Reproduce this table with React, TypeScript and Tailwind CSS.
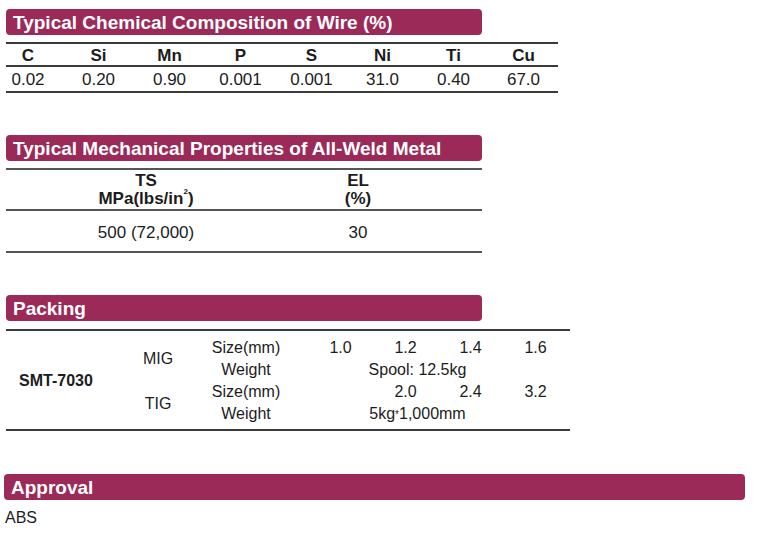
const font = { fontFamily: '"Liberation Sans", Arial, sans-serif' }

function Bar({ title, wide }: { title: string; wide?: boolean }) {
	return (
		<div
			className={`h-[26px] rounded-[4px] bg-[#9c2a58] flex items-center pl-[7px] pt-[1px] text-white font-bold text-[19px] leading-none ${
				wide ? "ml-[4px] w-[741px]" : "ml-[6px] w-[476px]"
			}`}
		>
			{title}
		</div>
	)
}

const chem = [
	["C", "0.02"],
	["Si", "0.20"],
	["Mn", "0.90"],
	["P", "0.001"],
	["S", "0.001"],
	["Ni", "31.0"],
	["Ti", "0.40"],
	["Cu", "67.0"],
]

const chemWidths = ["w-[57px] pr-[13px]", "w-[71px]", "w-[71px]", "w-[71px]", "w-[71px]", "w-[71px]", "w-[71px]", "w-[69px]"]

export default function App() {
	return (
		<div className="w-[761px] h-[542px] bg-white text-[#1c1c1c] overflow-hidden" style={font}>
			{/* Chemical composition */}
			<div className="pt-[9px]">
				<Bar title="Typical Chemical Composition of Wire (%)" />
			</div>
			<div className="ml-[6px] mt-[7px] w-[552px] border-t-2 border-b-2 border-[#3a3a3a] text-[17px]">
				<div className="flex h-[23px] items-center pt-[2px] font-bold border-b-2 border-[#3a3a3a]">
					{chem.map(([k], i) => (
						<div key={k} className={`${chemWidths[i]} text-center`}>
							{k}
						</div>
					))}
				</div>
				<div className="flex h-[24px] items-center pt-[2px]">
					{chem.map(([k, v], i) => (
						<div key={k} className={`${chemWidths[i]} text-center`}>
							{v}
						</div>
					))}
				</div>
			</div>

			{/* Mechanical properties */}
			<div className="mt-[42px]">
				<Bar title="Typical Mechanical Properties of All-Weld Metal" />
			</div>
			<div className="ml-[6px] mt-[7px] w-[476px] border-t-2 border-b-2 border-[#555] text-[17px]">
				<div className="flex h-[41px] items-center pt-[1px] font-bold leading-[18px] border-b-2 border-[#555]">
					<div className="w-[280px] text-center">
						TS
						<br />
						MPa(lbs/in<sup className="text-[8px] align-[6px]">2</sup>)
					</div>
					<div className="w-[144px] text-center">
						EL
						<br />
						(%)
					</div>
				</div>
				<div className="flex h-[40px] items-center pt-[3px]">
					<div className="w-[280px] text-center">500 (72,000)</div>
					<div className="w-[144px] text-center">30</div>
				</div>
			</div>

			{/* Packing */}
			<div className="mt-[42px]">
				<Bar title="Packing" />
			</div>
			<div className="ml-[6px] mt-[8px] w-[564px] border-t-2 border-b-2 border-[#3a3a3a] text-[16px] leading-[22px]">
				<div className="flex pt-[6px] pb-[4px]">
					<div className="w-[100px] flex items-center justify-center font-bold">SMT-7030</div>
					<div className="w-[104px] flex flex-col">
						<div className="h-[44px] flex items-center justify-center">MIG</div>
						<div className="h-[44px] flex items-center justify-center pt-[2px]">TIG</div>
					</div>
					<div className="flex flex-col">
						<div className="flex h-[22px]">
							<div className="w-[72px] text-center">Size(mm)</div>
							<div className="ml-[26px] w-[65px] text-center">1.0</div>
							<div className="w-[65px] text-center">1.2</div>
							<div className="w-[65px] text-center">1.4</div>
							<div className="w-[65px] text-center">1.6</div>
						</div>
						<div className="flex h-[22px]">
							<div className="w-[72px] text-center">Weight</div>
							<div className="w-[271px] text-center">Spool: 12.5kg</div>
						</div>
						<div className="flex h-[22px]">
							<div className="w-[72px] text-center">Size(mm)</div>
							<div className="ml-[91px] w-[65px] text-center">2.0</div>
							<div className="w-[65px] text-center">2.4</div>
							<div className="w-[65px] text-center">3.2</div>
						</div>
						<div className="flex h-[22px]">
							<div className="w-[72px] text-center">Weight</div>
							<div className="w-[271px] text-center">
								5kg<span className="text-[10px] align-[1px]">*</span>1,000mm
							</div>
						</div>
					</div>
				</div>
			</div>

			{/* Approval */}
			<div className="mt-[43px]">
				<Bar title="Approval" wide />
			</div>
			<div className="ml-[5px] mt-[8px] text-[16px] leading-[20px]">ABS</div>
		</div>
	)
}
